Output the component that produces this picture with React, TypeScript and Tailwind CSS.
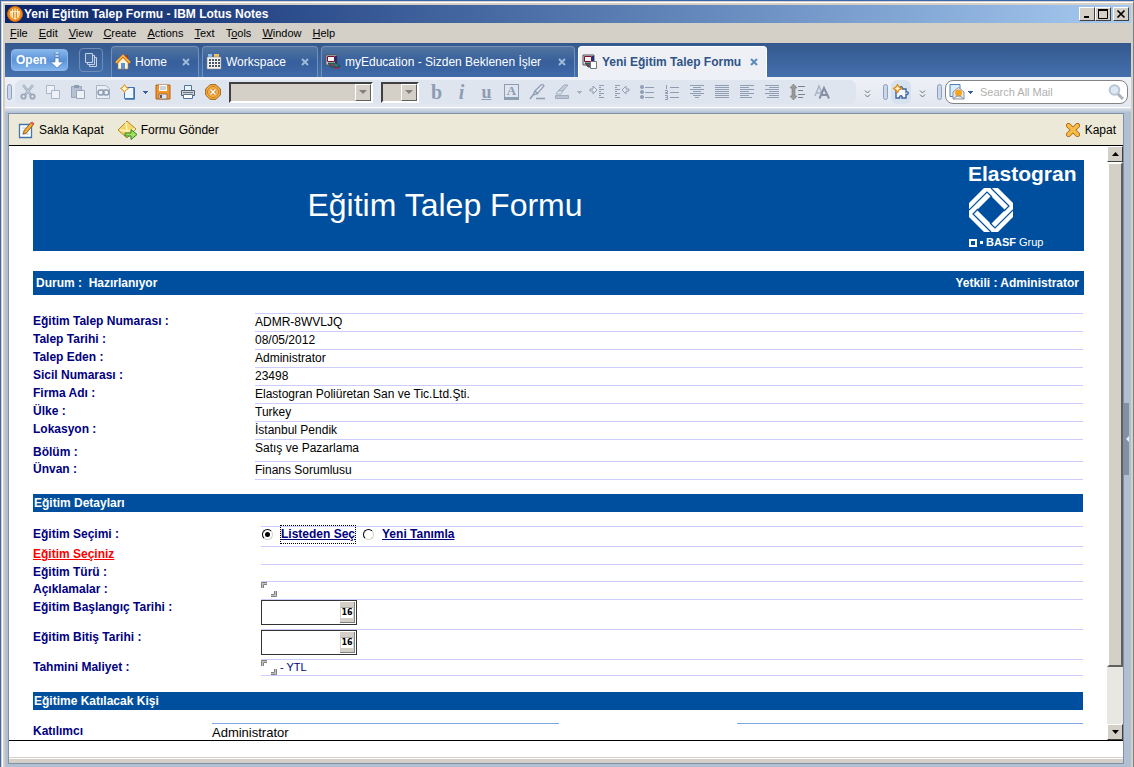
import React, { useState } from 'react';

const ToolButton: React.FC<{ label: string; children: React.ReactNode }> = ({ label, children }) => (
    <button type="button" aria-label={label} className="flex h-5 w-[25px] shrink-0 items-center justify-center">
        <svg viewBox="0 0 16 16" className="h-4 w-4" fill="none">
            {children}
        </svg>
    </button>
);

const DropArrow: React.FC<{ label: string; color: string }> = ({ label, color }) => (
    <button type="button" aria-label={label} className="flex h-5 w-[10px] shrink-0 items-center justify-center">
        <svg viewBox="0 0 5 3" className="h-[3px] w-[5px]" shapeRendering="crispEdges">
            <path d="M0 0h5L2.500 3z" fill={color} />
        </svg>
    </button>
);

const Grip = () => <div className="h-4 w-[5px] shrink-0 rounded-full border border-[#8c9fc0] bg-[#cdd7e8]" />;

const Chevrons: React.FC<{ label: string }> = ({ label }) => (
    <button type="button" aria-label={label} className="flex w-[22px] shrink-0 items-center justify-center">
        <svg viewBox="0 0 7 8" className="mt-1 h-2 w-[7px]" fill="none" stroke="#6c7078">
            <path d="M1 .5l2.500 2.500 2.500-2.500M1 4.500l2.500 2.500 2.500-2.500" />
        </svg>
    </button>
);

const Combo: React.FC<{ label: string; className: string }> = ({ label, className }) => (
    <div className={`flex h-[21px] shrink-0 border-2 border-t-[#404040] border-l-[#404040] border-r-white border-b-white bg-[#d4d0c8] ${className}`}>
        <select aria-label={label} disabled className="min-w-0 flex-1 appearance-none bg-transparent text-[11px]" />
        <span className="pointer-events-none flex w-4 items-center justify-center border border-t-white border-l-white border-r-[#606060] border-b-[#606060]">
            <svg viewBox="0 0 8 4" className="h-1 w-2">
                <path d="M0 0h8L4 4z" fill="#808080" />
            </svg>
        </span>
    </div>
);

/* Horizontal rules shared by the paragraph and list icons */
const Lines: React.FC<{ rows: [number, number][] }> = ({ rows }) => (
    <g shapeRendering="crispEdges" fill="#8e9cb4">
        {rows.map(([x, w], i) => (
            <rect key={i} x={x} y={1 + i * 2} width={w} height="1" />
        ))}
    </g>
);

const Tab: React.FC<{ title: string; active?: boolean; className: string; children: React.ReactNode }> = ({ title, active, className, children }) => (
    <div
        className={`flex h-[31px] shrink-0 items-center rounded-t border border-b-0 pl-[3px] ${className} ${
            active ? 'border-white bg-[#eef0f6] font-bold text-[#2f5485]' : 'border-[#7390b9] bg-linear-to-b from-[#51749f] via-[#365f9c] to-[#406ba8] text-white'
        }`}
    >
        <svg viewBox="0 0 16 16" className="h-4 w-4 shrink-0">
            {children}
        </svg>
        <button type="button" className="ml-1 flex-1 text-left text-[12px] whitespace-nowrap">{title}</button>
        <button type="button" aria-label={`Close ${title}`} className="mr-2 flex h-4 w-[9px] items-center justify-center">
            <svg viewBox="0 0 8 8" className="h-2 w-2" stroke={active ? '#5b8db8' : '#9dbbd8'} strokeWidth="2">
                <path d="M1 1l6 6M7 1L1 7" />
            </svg>
        </button>
    </div>
);

const WindowButton: React.FC<{ label: string; children: React.ReactNode }> = ({ label, children }) => (
    <button
        type="button"
        aria-label={label}
        className="flex h-[14px] w-4 items-center justify-center border border-t-white border-l-white border-r-[#404040] border-b-[#404040] bg-[#d4d0c8]"
    >
        <svg viewBox="0 0 10 10" className="h-[10px] w-[10px]" fill="none" stroke="#000">
            {children}
        </svg>
    </button>
);

const menus: [string, string, string][] = [
    ['', 'F', 'ile'],
    ['', 'E', 'dit'],
    ['', 'V', 'iew'],
    ['', 'C', 'reate'],
    ['', 'A', 'ctions'],
    ['', 'T', 'ext'],
    ['T', 'o', 'ols'],
    ['', 'W', 'indow'],
    ['', 'H', 'elp'],
];

const TitleBar = () => (
    <header className="flex h-[18px] shrink-0 items-center bg-linear-to-r from-[#0a246a] to-[#a6caf0] pr-[2px] pl-[2px]">
        <svg viewBox="0 0 16 16" className="h-4 w-4 shrink-0">
            <circle cx="8" cy="8" r="7.500" fill="#f08a1c" stroke="#c86a10" />
            <path d="M3 5h10v3c0 3-2 5-5 5S3 11 3 8z" fill="#ffd08a" />
            <path d="M5.500 3v8M8 2.500v11M10.500 3v8M3 6h10" stroke="#fff4d8" />
            <path d="M6.700 6v6M9.300 6v6" stroke="#e07810" />
        </svg>
        <h1 className="ml-[1px] flex-1 text-[12px] leading-[18px] font-bold whitespace-nowrap text-white">Yeni Eğitim Talep Formu - IBM Lotus Notes</h1>
        <WindowButton label="Minimize">
            <path d="M2 8h5" strokeWidth="2" />
        </WindowButton>
        <WindowButton label="Maximize">
            <path d="M.5 1v8.500h9V1" />
            <path d="M0 1h10" strokeWidth="2" />
        </WindowButton>
        <span className="w-[2px]" />
        <WindowButton label="Close">
            <path d="M1.500 1.500l7 7M8.500 1.500l-7 7" strokeWidth="1.700" />
        </WindowButton>
    </header>
);

const MenuBar = () => (
    <nav className="flex h-5 shrink-0 items-center gap-[11px] pl-[5px] text-[11px]">
        {menus.map(([pre, key, rest]) => (
            <button type="button" key={key + rest}>
                {pre}
                <span className="underline">{key}</span>
                {rest}
            </button>
        ))}
    </nav>
);

const MachineIcon = () => (
    <>
        <path d="M1 1h11v10H1z" fill="#d8d8d8" stroke="#555" />
        <path d="M2.500 2.500h7v5h-7z" fill="#f4f4f4" stroke="#7b1233" />
        <path d="M10 2h2v8h-2z" fill="#1c2f80" />
        <path d="M3 9h9l3 4H6z" fill="#1c8080" stroke="#303030" strokeWidth=".8" />
        <path d="M5 11h5M9 14h5" stroke="#c01830" />
    </>
);

const TabBar = () => (
    <div className="flex h-[34px] shrink-0 items-end overflow-hidden bg-linear-to-b from-[#34598e] to-[#4470ad]">
        <button
            type="button"
            className="mb-[6px] ml-[6px] flex h-[22px] w-[57px] shrink-0 items-center gap-[3px] rounded-sm border border-[#8bb6e8] bg-linear-to-b from-[#86b7ec] via-[#5c93d8] to-[#82b5ee] pl-1 text-[12px] font-bold text-white"
        >
            Open
            <svg viewBox="0 0 14 16" className="h-4 w-[14px] shrink-0">
                <path d="M5 0h4v2H5zM5 3h4v2H5zM5 6h4v4h4.500L7 16 .5 10H5z" fill="#fff" stroke="#376cae" strokeWidth=".6" />
            </svg>
        </button>
        <button
            type="button"
            aria-label="Open list"
            className="mr-2 mb-[5px] ml-[11px] flex h-6 w-6 shrink-0 items-center justify-center rounded-sm border border-[#708db6]"
        >
            <svg viewBox="0 0 14 14" className="h-[14px] w-[14px]" fill="#446a9e" stroke="#c3d2e6">
                <path d="M5.500 4.500h7v9h-7z" />
                <path d="M3.500 2.500h7v9h-7z" />
                <path d="M1.500 .5h7v9h-7z" />
            </svg>
        </button>
        <div className="flex min-w-0 gap-[3px]">
            <Tab title="Home" className="w-[88px]">
                <path d="M11 1h2v5h-2z" fill="#a03a20" />
                <path d="M3 8l5-5 5 5v7H3z" fill="#fff3d6" stroke="#b8803a" strokeWidth=".6" />
                <path d="M6 9h4v6H6z" fill="#5c93d8" />
                <path d="M1 9l7-7 7 7" fill="none" stroke="#d07818" strokeWidth="3" />
                <path d="M1 8.500l7-7 7 7" fill="none" stroke="#ffc050" strokeWidth="1.200" />
            </Tab>
            <Tab title="Workspace" className="w-[116px]">
                <path d="M2 0h4v3H2z" fill="#8cc0f0" />
                <path d="M8 0h5v3H8z" fill="#f6c25a" />
                <path d="M1 3h14v12H1z" fill="#f4f2ea" stroke="#888" strokeWidth=".6" />
                <g fill="#48546a">
                    {[5, 8, 11].map((y) => [3, 6, 9, 12].map((x) => <rect key={`${x}-${y}`} x={x} y={y} width="2" height="2" />))}
                </g>
            </Tab>
            <Tab title="myEducation - Sizden Beklenen İşler" className="w-[254px]">
                <MachineIcon />
            </Tab>
            <Tab title="Yeni Eğitim Talep Formu" active className="w-[189px]">
                <MachineIcon />
                <path d="M8.500 7.500h6v7h-6z" fill="#fff" stroke="#777" />
            </Tab>
        </div>
    </div>
);

const ToolBar = () => (
    <div className="flex h-[30px] shrink-0 items-center bg-linear-to-b from-[#eef1f7] to-[#e3e7f0] pr-[3px] pl-[2px]">
        <Grip />
        <div className="ml-[3px] flex h-6 min-w-0 flex-1 items-center overflow-hidden rounded-md bg-[#dfe5ee]">
            <ToolButton label="Cut">
                <path d="M3 1l8 10M13 1L5 11" stroke="#98a6bb" strokeWidth="2.500" />
                <path d="M3 1l8 10M13 1L5 11" stroke="#dbe2ec" strokeWidth=".8" />
                <circle cx="3.500" cy="12.500" r="2.200" stroke="#98a6bb" strokeWidth="1.800" />
                <circle cx="12.500" cy="12.500" r="2.200" stroke="#98a6bb" strokeWidth="1.800" />
            </ToolButton>
            <ToolButton label="Copy">
                <path d="M1.500 1.500h8v8h-8z" fill="#eef1f6" stroke="#a9b6c9" />
                <path d="M6.500 6.500h8v8h-8z" fill="#eef1f6" stroke="#a9b6c9" />
            </ToolButton>
            <ToolButton label="Paste">
                <path d="M1.500 2.500h10v11h-10z" fill="#b6c1d1" stroke="#98a6bb" />
                <path d="M4 1h5v3H4z" fill="#8e9cb2" />
                <path d="M6.500 6.500h8v8h-8z" fill="#eef1f6" stroke="#98a6bb" />
            </ToolButton>
            <ToolButton label="Copy as link">
                <path d="M1.500 1.500h9l4 3v10h-13z" fill="#eaeef4" stroke="#a9b6c9" />
                <rect x="3" y="6" width="6" height="5" rx="2.500" stroke="#8e9cb2" strokeWidth="1.500" />
                <rect x="8" y="6" width="6" height="5" rx="2.500" stroke="#8e9cb2" strokeWidth="1.500" />
            </ToolButton>
            <ToolButton label="New">
                <path d="M4.500 3.500h10v11h-10z" fill="#eef6ff" stroke="#3f74ae" />
                <path d="M14 4v11H5" stroke="#3f74ae" strokeWidth="1.500" />
                <path d="M4.500 .5L6 3l2.500 1.500L6 6l-1.500 2.500L3 6 .5 4.500 3 3z" fill="#fff3c8" stroke="#e38a12" />
            </ToolButton>
            <DropArrow label="New options" color="#35629c" />
            <ToolButton label="Save">
                <path d="M1 1h14v14H1z" fill="#f0962c" stroke="#b0601c" />
                <path d="M4 1h8v6H4z" fill="#fff" />
                <path d="M5 3h6M5 5h6" stroke="#9aa7ba" />
                <path d="M4 10h8v5H4z" fill="#dfe4ec" stroke="#8a5a30" strokeWidth=".7" />
                <path d="M6 11v3" stroke="#556" strokeWidth="2" />
            </ToolButton>
            <ToolButton label="Print">
                <path d="M4.500 1.500h7v5h-7z" fill="#eaf4ff" stroke="#52779f" />
                <path d="M1.500 6.500h13v5h-13z" fill="#cfd4dc" stroke="#55606f" />
                <path d="M3 8.500h10" stroke="#6b7685" />
                <path d="M3.500 10.500h9v4h-9z" fill="#fff" stroke="#52779f" />
            </ToolButton>
            <ToolButton label="Stop">
                <path d="M5 .7h6L15.300 5v6L11 15.300H5L.7 11V5z" fill="#f8b648" stroke="#a05a12" />
                <circle cx="8" cy="8" r="5.500" stroke="#cf7a18" />
                <path d="M5.500 5.500l5 5M10.500 5.500l-5 5" stroke="#b86818" strokeWidth="3" />
                <path d="M5.500 5.500l5 5M10.500 5.500l-5 5" stroke="#fff" strokeWidth="1.700" />
            </ToolButton>
            <Combo label="Font" className="ml-1 w-[144px]" />
            <Combo label="Font size" className="mr-[5px] ml-2 w-[38px]" />
            <button type="button" aria-label="Bold" className="w-[25px] shrink-0 font-['Liberation_Serif',serif] text-[20px] leading-5 font-bold text-[#8e9cb4]">b</button>
            <button type="button" aria-label="Italic" className="w-[25px] shrink-0 font-['Liberation_Serif',serif] text-[20px] leading-5 font-bold text-[#8e9cb4] italic">i</button>
            <button type="button" aria-label="Underline" className="w-[25px] shrink-0 font-['Liberation_Serif',serif] text-[18px] leading-4 font-bold text-[#8e9cb4] underline">u</button>
            <button type="button" aria-label="Font color" className="mx-[5px] h-4 w-[15px] shrink-0 border border-b-3 border-[#8e9cb4] text-center font-['Liberation_Serif',serif] text-[13px] leading-3 font-bold text-[#8e9cb4]">A</button>
            <ToolButton label="Highlight">
                <path d="M4 11l2-4 6-6q2-1 3 1l-7 8z" fill="#e6ebf2" stroke="#8e9cb4" strokeWidth="1.300" />
                <path d="M6 7l3 3M4 11l-3 4M7 14.500h9" stroke="#8e9cb4" strokeWidth="1.500" />
            </ToolButton>
            <ToolButton label="Text marker">
                <path d="M4 7l6-6h4l-5 6z" fill="#c2cbd9" stroke="#a0acc0" />
                <path d="M4 7h5l-2 3H2z" fill="#e6ebf2" stroke="#a0acc0" />
                <path d="M1.500 11.500h13v3h-13z" fill="#b8c2d1" stroke="#a0acc0" />
            </ToolButton>
            <DropArrow label="Marker options" color="#a8b0bd" />
            <ToolButton label="Indent">
                <path d="M1 5h3V2l4 4-4 4V7H1z" fill="#e6ebf2" stroke="#8e9cb4" />
                <Lines rows={[[10, 5], [10, 2], [10, 5], [10, 2], [10, 5], [10, 2], [10, 5]]} />
            </ToolButton>
            <ToolButton label="Outdent">
                <path d="M15 5h-3V2L8 6l4 4V7h3z" fill="#e6ebf2" stroke="#8e9cb4" />
                <Lines rows={[[1, 5], [1, 2], [1, 5], [1, 2], [1, 5], [1, 2], [1, 5]]} />
            </ToolButton>
            <ToolButton label="Bulleted list">
                <circle cx="3" cy="3" r="2" fill="#8e9cb4" />
                <circle cx="3" cy="8" r="2" fill="#8e9cb4" />
                <circle cx="3" cy="13" r="2" fill="#8e9cb4" />
                <path d="M6 3.500h9M6 8.500h9M6 13.500h9" stroke="#8e9cb4" />
            </ToolButton>
            <ToolButton label="Numbered list">
                <path d="M2.500 1v4M1 6.500h2.500v2H1.500v1H4M1 11.500h2.500v4H1M1.500 13.500h2" stroke="#8e9cb4" />
                <path d="M6 3.500h9M6 8.500h9M6 13.500h9" stroke="#8e9cb4" />
            </ToolButton>
            <ToolButton label="Align center">
                <Lines rows={[[1, 14], [4, 8], [1, 14], [4, 8], [1, 14], [4, 8], [6, 4]]} />
            </ToolButton>
            <ToolButton label="Justify">
                <Lines rows={[[1, 14], [1, 14], [1, 14], [1, 14], [1, 14], [1, 14], [1, 14]]} />
            </ToolButton>
            <ToolButton label="Align left">
                <Lines rows={[[1, 14], [1, 9], [1, 14], [1, 9], [1, 14], [1, 9], [1, 12]]} />
            </ToolButton>
            <ToolButton label="Align right">
                <Lines rows={[[1, 14], [5, 10], [1, 14], [5, 10], [1, 14], [5, 10], [3, 12]]} />
            </ToolButton>
            <ToolButton label="Line spacing">
                <path d="M4.500 0L8 4H6v8h2l-3.500 4L1 12h2V4H1z" fill="#9a9a9a" stroke="#808080" strokeWidth=".7" />
                <path d="M9 2.500h7M9 6.500h5M9 10.500h7M9 13.500h5" stroke="#7d828c" />
            </ToolButton>
            <ToolButton label="Text properties">
                <path d="M1 12L5 2l4 10M2.500 9h5" stroke="#a9b6c9" strokeWidth="1.500" />
                <path d="M5.500 14.500L10 4l5 10.500M8 11h5" stroke="#8590a2" strokeWidth="2" />
            </ToolButton>
        </div>
        <Chevrons label="More text tools" />
        <span className="w-[5px] shrink-0" />
        <Grip />
        <div className="ml-[3px] flex h-6 w-5 shrink-0 items-center justify-center rounded-md bg-[#d6e2ef]">
            <ToolButton label="Add-ons">
                <path d="M3 5h4c-1-3 3-3 2.500 0H13v3c3-1 3 3 0 2.500V14H9c1-3-3-3-2.500 0H3z" fill="#f5f9ff" stroke="#3d649c" strokeWidth="1.400" />
                <path d="M4.500 .5L6 3l2.500 1.500L6 6l-1.500 2.500L3 6 .5 4.500 3 3z" fill="#fff3c8" stroke="#e38a12" strokeWidth="1.300" />
            </ToolButton>
        </div>
        <Chevrons label="More add-ons" />
        <span className="w-1 shrink-0" />
        <Grip />
        <form role="search" className="ml-[3px] flex h-6 w-[183px] shrink-0 items-center rounded-lg border border-[#848484] bg-white pl-[3px]" onSubmit={(e) => e.preventDefault()}>
            <svg viewBox="0 0 16 16" className="h-4 w-4 shrink-0">
                <path d="M1 .5h10v12H1z" fill="#dcebfa" stroke="#4d82b8" />
                <path d="M4 8l5.500-4.500L15 8v7H4z" fill="#e9edf2" stroke="#8893a3" />
                <circle cx="9.500" cy="9" r="3.500" fill="#f7a51f" />
                <path d="M4 15l4-3h3l4 3" fill="none" stroke="#8893a3" />
            </svg>
            <DropArrow label="Search scope" color="#35629c" />
            <input type="text" aria-label="Search All Mail" placeholder="Search All Mail" className="ml-[5px] min-w-0 flex-1 bg-transparent text-[11px] outline-none placeholder:text-[#b0b0b0]" />
            <button type="submit" aria-label="Search" className="mr-[3px]">
                <svg viewBox="0 0 16 16" className="h-4 w-4" fill="none">
                    <path d="M9 9l6 6" stroke="#aab2bd" strokeWidth="3" />
                    <circle cx="6.500" cy="6" r="4.800" fill="#dce8f3" stroke="#b9c5d3" strokeWidth="2" />
                </svg>
            </button>
        </form>
    </div>
);

const ActionBar = () => (
    <div className="flex h-8 shrink-0 items-center border-b border-black bg-[#ece9d8] pr-[7px] pl-[9px] text-[12px]">
        <button type="button" className="flex items-center gap-1">
            <svg viewBox="0 0 17 18" className="h-[18px] w-[17px]">
                <path d="M1.500 3.500h12v13h-12z" fill="#fff" stroke="#4576a8" strokeWidth="1.300" />
                <path d="M4 13h7M4 7h4M4 10h3" stroke="#a9c8e8" />
                <path d="M5 13l1.500-4L13 1.500l2.500 2L8.500 12z" fill="#f6ab2e" stroke="#7b4a1c" strokeWidth=".8" />
                <path d="M12.500 2l1.500-1.500 2.500 2L15 4z" fill="#e2574c" />
            </svg>
            Sakla Kapat
        </button>
        <button type="button" className="ml-[13px] flex items-center gap-[3px]">
            <svg viewBox="0 0 21 20" className="h-5 w-[21px]">
                <path d="M1 10l9-9 9 8-9 9z" fill="#f6d66c" stroke="#b48a28" />
                <path d="M3 10l7 1 8-2M9 2l1 9" fill="none" stroke="#fff2bc" strokeWidth="1.500" />
                <path d="M8 13h6V9.500l6 5-6 5V16H8z" fill="#a5dc62" stroke="#2f8425" />
            </svg>
            Formu Gönder
        </button>
        <button type="button" className="ml-auto flex items-center gap-[5px]">
            <svg viewBox="0 0 14 14" className="h-[14px] w-[14px]" strokeLinecap="round">
                <path d="M2.500 2.500l9 9M11.500 2.500l-9 9" stroke="#a86615" strokeWidth="5" />
                <path d="M2.500 2.500l9 9M11.500 2.500l-9 9" stroke="#f9bd45" strokeWidth="3.400" />
            </svg>
            Kapat
        </button>
    </div>
);

const Logo = () => (
    <div className="flex w-[116px] shrink-0 flex-col text-white">
        <span className="text-[21px] leading-[27px] font-bold">Elastogran</span>
        <svg viewBox="0 0 44 44" className="mt-px ml-px h-11 w-11">
            <path d="M15 0h14l15 15v14L29 44H15L0 29V15z" fill="#fff" />
            <path d="M22 8l14 14-14 14L8 22z" fill="#004f9e" />
            {[0, 90, 180, 270].map((angle) => (
                <path key={angle} transform={`rotate(${angle} 22 22)`} d="M0 22L18 4l5 5" fill="none" stroke="#004f9e" strokeWidth="1.200" />
            ))}
        </svg>
        <span className="mt-1 ml-px flex items-center gap-[3px] text-[11px] leading-[13px]">
            <span className="h-2 w-2 border-2 border-white" />
            <span className="h-[3px] w-[3px] bg-white" />
            <span>
                <b>BASF</b> Grup
            </span>
        </span>
    </div>
);

interface FieldRowProps {
    label: React.ReactNode;
    height: string;
    labelClass?: string;
    labelWidth?: string;
    children?: React.ReactNode;
}

const FieldRow: React.FC<FieldRowProps> = ({ label, height, labelClass = '', labelWidth = 'w-[222px]', children }) => (
    <div className={`flex items-start ${height}`}>
        <div className={`shrink-0 font-bold text-[#000080] ${labelWidth} ${labelClass}`}>{label}</div>
        <div className="h-full flex-1 border-t border-[#ccccff]">{children}</div>
    </div>
);

const requestFields = [
    { label: 'Eğitim Talep Numarası :', value: 'ADMR-8WVLJQ', height: 'h-[18px]' },
    { label: 'Talep Tarihi :', value: '08/05/2012', height: 'h-[18px]' },
    { label: 'Talep Eden :', value: 'Administrator', height: 'h-[18px]' },
    { label: 'Sicil Numarası :', value: '23498', height: 'h-[18px]' },
    { label: 'Firma Adı :', value: 'Elastogran Poliüretan San ve Tic.Ltd.Şti.', height: 'h-[18px]' },
    { label: 'Ülke :', value: 'Turkey', height: 'h-[18px]' },
    { label: 'Lokasyon :', value: 'İstanbul Pendik', height: 'h-[18px]' },
    { label: 'Bölüm :', value: 'Satış ve Pazarlama', height: 'h-[22px]', labelClass: 'pt-[5px]' },
    { label: 'Ünvan :', value: 'Finans Sorumlusu', height: 'h-[18px]' },
];

const SectionTitle: React.FC<{ children: React.ReactNode }> = ({ children }) => (
    <h3 className="h-[18px] bg-[#004f9e] pl-[1px] leading-[18px] font-bold text-white">{children}</h3>
);

/* Corner brackets that mark the start and end of an editable text field */
const BracketField: React.FC<{ id: string }> = ({ id }) => (
    <span className="flex h-[15px] w-4 shrink-0 items-stretch">
        <svg viewBox="0 0 6 6" className="h-[6px] w-[6px] shrink-0" fill="none">
            <path d="M.5 6V.5H6" stroke="#808080" />
            <path d="M1.500 6V1.500H6" stroke="#c0c0c0" />
            <path d="M2.500 6V2.500H6" stroke="#808080" />
        </svg>
        <input id={id} type="text" className="h-3 w-1 bg-transparent outline-none" />
        <svg viewBox="0 0 6 6" className="h-[6px] w-[6px] shrink-0 self-end" fill="none">
            <path d="M5.500 0v5.500H0" stroke="#808080" />
            <path d="M4.500 0v4.500H0" stroke="#c0c0c0" />
            <path d="M3.500 0v3.500H0" stroke="#808080" />
        </svg>
    </span>
);

const DateField: React.FC<{ id: string }> = ({ id }) => (
    <div className="flex h-[25px] w-24 items-start border border-[#333] bg-white pt-px pr-px">
        <input id={id} type="text" className="h-full min-w-0 flex-1 bg-transparent px-1 outline-none" />
        <button type="button" aria-label="Pick a date" className="flex h-[21px] w-[15px] items-center justify-center border-r border-b border-[#808080] bg-[#d4d0c8]">
            <span className="border-t border-[#aaa] bg-white font-['DejaVu_Sans',sans-serif] text-[8px] leading-[10px] font-bold">16</span>
        </button>
    </div>
);

const Radio: React.FC<{ id: string; checked: boolean; onChange: () => void }> = ({ id, checked, onChange }) => (
    <span className="flex h-[11px] w-[11px] items-center justify-center rounded-full border border-t-black border-l-black border-r-[#d4d0c8] border-b-[#d4d0c8] bg-white">
        <input
            id={id}
            type="radio"
            name="selection"
            checked={checked}
            onChange={onChange}
            className="h-[5px] w-[5px] appearance-none rounded-full checked:bg-black"
        />
    </span>
);

const RequestForm = () => {
    const [selection, setSelection] = useState<'list' | 'new'>('list');

    return (
        <main className="min-w-0 flex-1 overflow-hidden bg-white pt-[14px] pr-[23px] pl-6 text-[12px] leading-[17px]">
            <div className="flex h-[91px] bg-[#004f9e]">
                <h2 className="flex flex-1 items-center justify-center pr-[111px] text-[32px] text-white">Eğitim Talep Formu</h2>
                <Logo />
            </div>

            <div className="mt-5 flex h-6 items-center justify-between bg-[#004f9e] pr-[5px] pl-[3px] font-bold text-white">
                <span className="whitespace-pre">Durum :  Hazırlanıyor</span>
                <span>Yetkili : Administrator</span>
            </div>

            <div className="mt-[18px] mr-px border-b border-transparent">
                {requestFields.map((field) => (
                    <FieldRow key={field.label} label={field.label} height={field.height} labelClass={field.labelClass}>
                        {field.value}
                    </FieldRow>
                ))}
                <div className="ml-[222px] h-px bg-[#ccccff]" />
            </div>

            <div className="mt-[13px] mr-px">
                <SectionTitle>Eğitim Detayları</SectionTitle>
            </div>
            <div className="mt-[14px] mr-px">
                <FieldRow label="Eğitim Seçimi :" height="h-5" labelWidth="w-[228px]">
                    <div className="ml-px flex h-[14px] items-center font-bold text-[#000080]">
                        <Radio id="sel-list" checked={selection === 'list'} onChange={() => setSelection('list')} />
                        <label htmlFor="sel-list" className="mx-2 outline outline-dotted outline-black underline">Listeden Seç</label>
                        <Radio id="sel-new" checked={selection === 'new'} onChange={() => setSelection('new')} />
                        <label htmlFor="sel-new" className="ml-2 underline">Yeni Tanımla</label>
                    </div>
                </FieldRow>
                <FieldRow label={<a href="#egitim" className="text-[#ff0000] underline">Eğitim Seçiniz</a>} height="h-[18px]" labelWidth="w-[228px]" />
                <FieldRow label="Eğitim Türü :" height="h-[17px]" labelWidth="w-[228px]" />
                <FieldRow label={<label htmlFor="notes">Açıklamalar :</label>} height="h-[18px]" labelWidth="w-[228px]">
                    <BracketField id="notes" />
                </FieldRow>
                <FieldRow label={<label htmlFor="start">Eğitim Başlangıç Tarihi :</label>} height="h-[30px]" labelWidth="w-[228px]">
                    <DateField id="start" />
                </FieldRow>
                <FieldRow label={<label htmlFor="end">Eğitim Bitiş Tarihi :</label>} height="h-[30px]" labelWidth="w-[228px]">
                    <DateField id="end" />
                </FieldRow>
                <FieldRow label={<label htmlFor="cost">Tahmini Maliyet :</label>} height="h-4" labelWidth="w-[228px]">
                    <div className="flex gap-[3px] text-[11px] leading-[15px] text-[#000080]">
                        <BracketField id="cost" />- YTL
                    </div>
                </FieldRow>
                <div className="ml-[228px] h-px bg-[#ccccff]" />
            </div>

            <div className="mt-4 mr-px">
                <SectionTitle>Eğitime Katılacak Kişi</SectionTitle>
                <div className="mt-[13px] flex items-start">
                    <div className="w-[179px] shrink-0 font-bold text-[#000080]">Katılımcı</div>
                    <div className="flex-1 border-t border-[#7fa5e8] text-[13px]">Administrator</div>
                    <div className="w-[178px] shrink-0" />
                    <div className="flex-1 border-t border-[#7fa5e8]" />
                </div>
            </div>
        </main>
    );
};

const ScrollButton: React.FC<{ label: string; path: string }> = ({ label, path }) => (
    <button
        type="button"
        aria-label={label}
        className="flex h-4 w-full shrink-0 items-center justify-center border border-t-white border-l-white border-r-[#404040] border-b-[#404040] bg-[#d4d0c8]"
    >
        <svg viewBox="0 0 7 4" className="h-1 w-[7px]">
            <path d={path} />
        </svg>
    </button>
);

const ScrollBar = () => (
    <div className="flex w-4 shrink-0 flex-col bg-[#e9e7e2]">
        <ScrollButton label="Scroll up" path="M3.500 0L7 4H0z" />
        <div className="flex-[505] border-2 border-t-white border-l-white border-r-[#606060] border-b-[#606060] bg-[#d4d0c8]" />
        <div className="flex-[57]" />
        <ScrollButton label="Scroll down" path="M0 0h7L3.500 4z" />
    </div>
);

export default function App() {
    return (
        <div className="h-screen overflow-hidden bg-[#3a67ad] pt-px pl-px font-['Liberation_Sans',Arial,sans-serif] text-black">
            <div className="h-full border-t border-r border-l border-t-[#d4d0c8] border-r-[#808080] border-l-[#d4d0c8] bg-white pt-px pl-px">
                <div className="flex h-full flex-col bg-[#d4d0c8] pt-[2px] pr-[2px] pl-[2px]">
                    <TitleBar />
                    <MenuBar />
                    <TabBar />
                    <ToolBar />
                    <div className="h-[6px] shrink-0 border-t border-white bg-linear-to-b from-[#dde3ec] to-[#b0bfd2]" />
                    <div className="flex min-h-0 flex-1 bg-[#b0bfd2] pb-[3px] pl-[3px]">
                        <div className="flex min-w-0 flex-1 flex-col border border-[#8090a6] bg-white">
                            <ActionBar />
                            <div className="flex min-h-0 flex-1 border-b border-black">
                                <RequestForm />
                                <ScrollBar />
                            </div>
                            <div className="h-4 shrink-0 bg-white" />
                            <div className="h-[6px] shrink-0 border-t border-[#d4d0c8] bg-white pt-px">
                                <div className="h-full bg-[#d4d0c8]" />
                            </div>
                        </div>
                        <div className="flex w-[7px] shrink-0 items-center">
                            <button type="button" aria-label="Expand sidebar" className="flex h-[72px] w-[5px] items-center justify-end bg-[#8190a3]">
                                <svg viewBox="0 0 3 6" className="h-[6px] w-[3px]">
                                    <path d="M3 0v6L0 3z" fill="#e5eefa" />
                                </svg>
                            </button>
                        </div>
                    </div>
                </div>
            </div>
        </div>
    );
}
